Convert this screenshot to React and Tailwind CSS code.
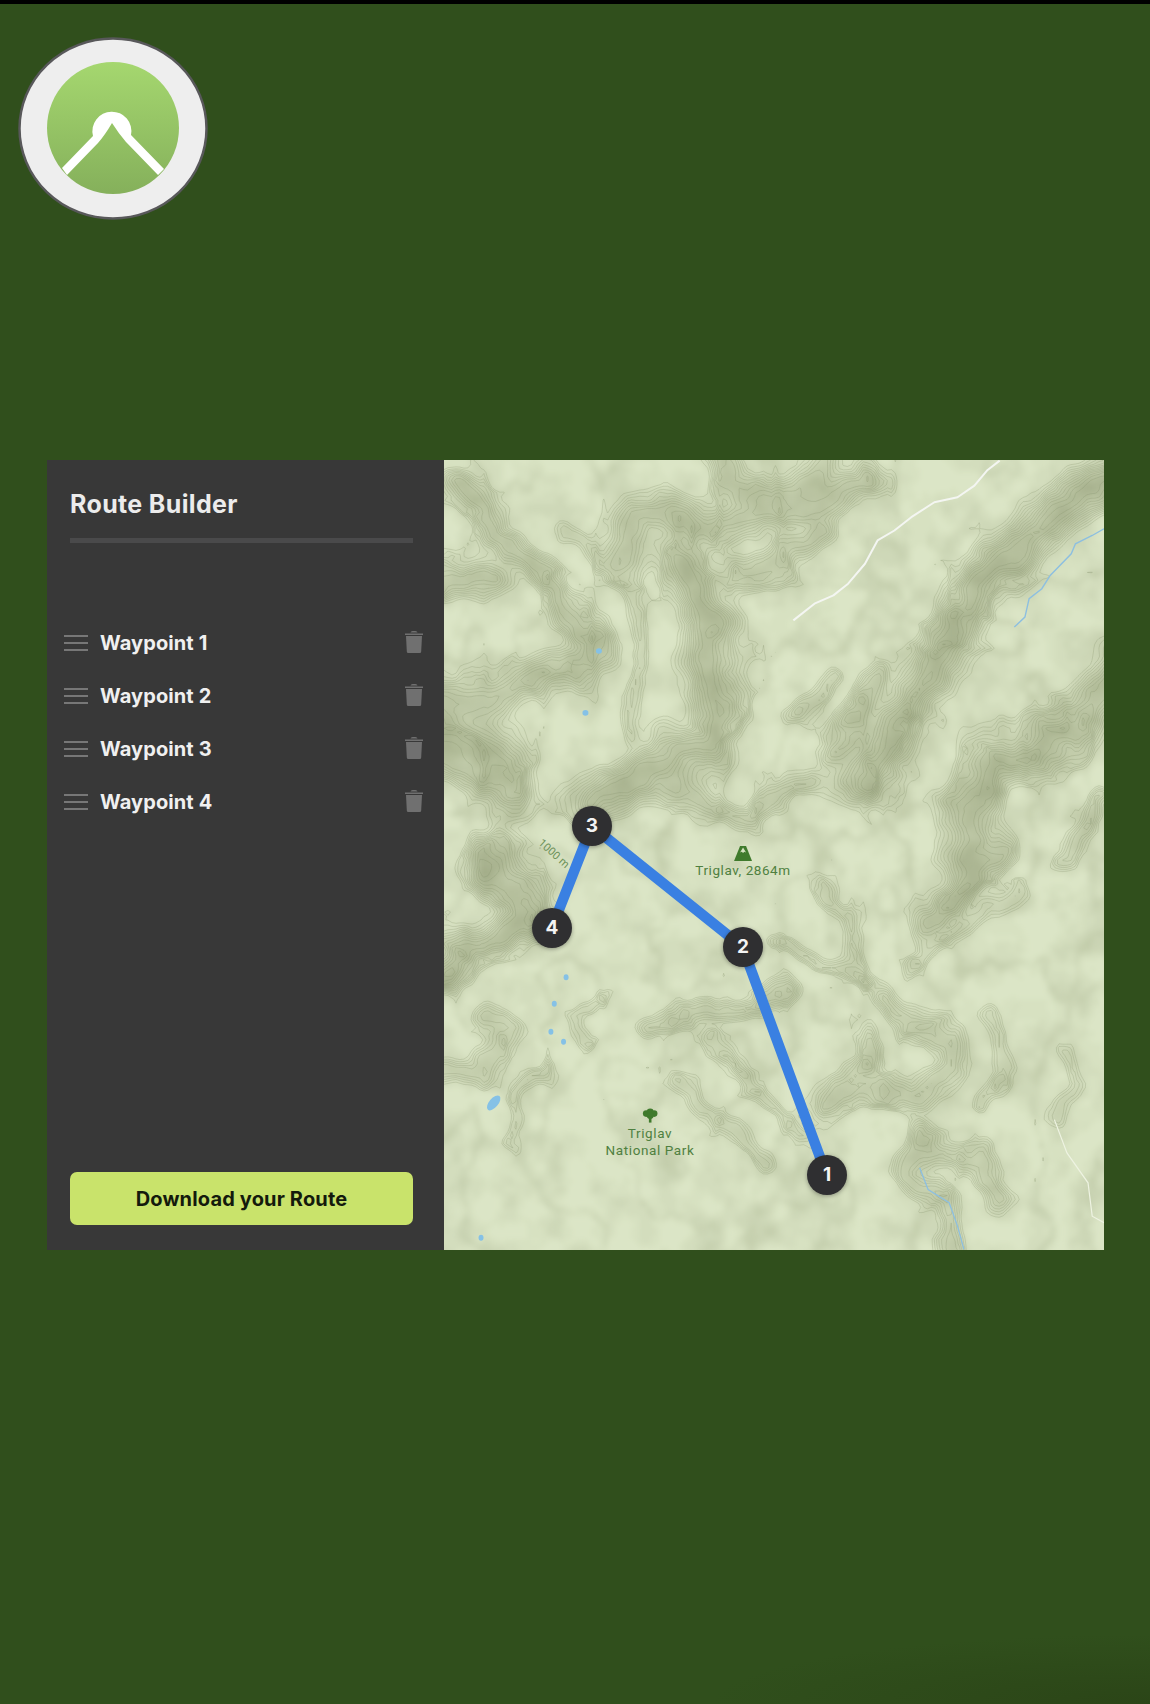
import React from "react";

const W = 661;
const H = 790;
const CELL = 4;

// ridges were read off two crops of the map, so they are in crop coordinates
const a = (pts) => pts.map(([x, y]) => [x / 2.372, y / 3]);
const b = (pts) => pts.map(([x, y]) => [x / 2.372, y / 3 + 390]);

const ridges = [
  { w: 17, k: 0.95, p: a([[1600, 40], [1450, 150], [1340, 270], [1260, 400], [1210, 520], [1170, 640], [1110, 760], [1040, 880], [990, 950]]) },
  { w: 18, k: 0.8, p: a([[1600, 620], [1500, 800], [1400, 880], [1290, 900], [1250, 1050], [1240, 1200]]) },
  { w: 12, k: 0.7, p: b([[1330, 0], [1250, 100], [1150, 220]]) },
  { w: 17, k: 0.9, p: a([[560, 280], [610, 400], [640, 520], [620, 640], [650, 740], [640, 860], [560, 880], [490, 920], [430, 960], [350, 1010]]) },
  { w: 15, k: 0.7, p: a([[1000, 60], [880, 120], [760, 150], [640, 190], [520, 140], [470, 170], [430, 300]]) },
  { w: 11, k: 0.6, p: a([[900, 200], [800, 300], [700, 340]]) },
  { w: 11, k: 0.7, p: a([[50, 50], [100, 130], [130, 220], [230, 340], [310, 450], [350, 520]]) },
  { w: 14, k: 0.7, p: a([[-30, 340], [100, 350]]) },
  { w: 16, k: 0.65, p: a([[-30, 720], [100, 720], [250, 640], [350, 590]]) },
  { w: 17, k: 0.85, p: a([[-30, 800], [100, 860], [170, 900], [170, 1000]]) },
  { w: 14, k: 0.7, p: a([[-30, 890], [120, 950]]) },
  { w: 11, k: 0.65, p: a([[1030, 650], [1000, 760], [930, 850]]) },
  { w: 8, k: 0.45, p: a([[920, 640], [850, 760]]) },
  { w: 10, k: 0.55, p: a([[550, 970], [640, 1040], [720, 1070], [800, 980], [880, 950]]) },
  { w: 10, k: 0.55, p: a([[640, -20], [680, 60], [780, 100], [880, 40], [900, -20]]) },
  { w: 8, k: 0.4, p: a([[300, 230], [380, 300], [430, 380], [480, 600], [450, 800]]) },
  { w: 8, k: 0.5, p: a([[1568, 1000], [1500, 1100], [1470, 1200]]) },
  { w: 16, k: 0.85, p: b([[110, 20], [170, 120], [200, 220], [100, 280], [-20, 350]]) },
  { w: 10, k: 0.5, p: b([[-20, 680], [100, 640], [170, 520], [100, 490]]) },
  { w: 9, k: 0.55, p: b([[480, 520], [560, 490], [680, 470], [760, 460], [800, 440]]) },
  { w: 6, k: 0.45, p: b([[780, 290], [880, 320], [960, 340], [1000, 400]]) },
  { w: 12, k: 0.6, p: b([[1000, 600], [1000, 680], [920, 750], [1000, 720], [1130, 740], [1200, 640], [1190, 560], [1050, 450]]) },
  { w: 10, k: 0.55, p: b([[1130, 870], [1090, 950], [1170, 1050], [1200, 1220]]) },
  { w: 10, k: 0.55, p: b([[1170, 900], [1270, 940], [1310, 1050]]) },
  { w: 7, k: 0.4, p: b([[1380, 130], [1250, 220], [1100, 340]]) },
  { w: 6, k: 0.35, p: b([[150, 880], [180, 730], [250, 660]]) },
  { w: 6, k: 0.35, p: b([[340, 600], [320, 480], [400, 430]]) },
  { w: 7, k: 0.4, p: b([[620, 560], [680, 650], [800, 780], [860, 860]]) },
  { w: 8, k: 0.45, p: b([[560, 700], [600, 760], [700, 860], [760, 950]]) },
  { w: 7, k: 0.35, p: b([[1480, 600], [1500, 700], [1450, 800]]) },
  { w: 8, k: 0.4, p: b([[1300, 500], [1330, 650], [1280, 760]]) },
  { w: 7, k: 0.35, p: b([[900, 100], [960, 200], [1000, 400]]) },
];

const hash = (x, y) => {
  const s = Math.sin(x * 127.1 + y * 311.7) * 43758.5453;
  return s - Math.floor(s);
};

const noise = (x, y) => {
  const ix = Math.floor(x);
  const iy = Math.floor(y);
  const fx = x - ix;
  const fy = y - iy;
  const ux = fx * fx * (3 - 2 * fx);
  const uy = fy * fy * (3 - 2 * fy);
  const top = hash(ix, iy) * (1 - ux) + hash(ix + 1, iy) * ux;
  const bottom = hash(ix, iy + 1) * (1 - ux) + hash(ix + 1, iy + 1) * ux;
  return top * (1 - uy) + bottom * uy;
};

const fbm = (x, y) => noise(x, y) * 0.55 + noise(x * 2.1, y * 2.1) * 0.3 + noise(x * 4.3, y * 4.3) * 0.15;

const segDist2 = (px, py, [x1, y1], [x2, y2]) => {
  const dx = x2 - x1;
  const dy = y2 - y1;
  let t = ((px - x1) * dx + (py - y1) * dy) / (dx * dx + dy * dy);
  t = Math.max(0, Math.min(1, t));
  const ex = px - x1 - t * dx;
  const ey = py - y1 - t * dy;
  return ex * ex + ey * ey;
};

const ridgeAt = (x, y) => {
  const wx = x + 30 * (fbm(x / 42 + 3, y / 42) - 0.5);
  const wy = y + 30 * (fbm(x / 42, y / 42 + 9) - 0.5);
  let keep = 1;
  for (const r of ridges) {
    let d = Infinity;
    for (let i = 0; i < r.p.length - 1; i++) d = Math.min(d, segDist2(wx, wy, r.p[i], r.p[i + 1]));
    keep *= 1 - r.k * Math.exp(-d / (2 * r.w * r.w));
  }
  return 1 - keep;
};

// thin branching folds, these fill the ground between the main ridges
const foldsAt = (x, y) => {
  const n = fbm(x / 62 + 11, y / 78 + 2);
  const fold = 1 - Math.min(1, Math.abs(2 * n - 1) * 5);
  return fold * fold;
};

const buildTerrain = () => {
  const cols = Math.ceil((W + 32) / CELL) + 1;
  const rows = Math.ceil((H + 32) / CELL) + 1;
  const field = new Float32Array(cols * rows);
  const shadePaths = Array.from({ length: 14 }, () => []);

  for (let j = 0; j < rows; j++) {
    for (let i = 0; i < cols; i++) {
      const x = i * CELL - 16;
      const y = j * CELL - 16;
      const s = ridgeAt(x, y);
      const f = foldsAt(x, y);
      field[j * cols + i] = s * 1.1 + f * 0.18 + 0.12 * fbm(x / 40 + 7, y / 40);
      const t = Math.max(0, Math.min(0.999, s * 0.74 + f * 0.24 + (fbm(x / 22, y / 22 + 5) - 0.32) * 0.52));
      shadePaths[Math.floor(t * 14)].push(`M${x} ${y}h${CELL}v${CELL}h-${CELL}z`);
    }
  }

  // marching squares, loose segments are fine at this line width
  const lines = [];
  for (let level = 0.26; level < 1.36; level += 0.075) {
    for (let j = 0; j < rows - 1; j++) {
      for (let i = 0; i < cols - 1; i++) {
        const v = [field[j * cols + i], field[j * cols + i + 1], field[(j + 1) * cols + i + 1], field[(j + 1) * cols + i]];
        const hits = [];
        const x = i * CELL - 16;
        const y = j * CELL - 16;
        if (v[0] < level !== v[1] < level) hits.push([x + (CELL * (level - v[0])) / (v[1] - v[0]), y]);
        if (v[1] < level !== v[2] < level) hits.push([x + CELL, y + (CELL * (level - v[1])) / (v[2] - v[1])]);
        if (v[3] < level !== v[2] < level) hits.push([x + (CELL * (level - v[3])) / (v[2] - v[3]), y + CELL]);
        if (v[0] < level !== v[3] < level) hits.push([x, y + (CELL * (level - v[0])) / (v[3] - v[0])]);
        for (let h = 0; h + 1 < hits.length; h += 2) {
          lines.push(`M${hits[h][0].toFixed(1)} ${hits[h][1].toFixed(1)}L${hits[h + 1][0].toFixed(1)} ${hits[h + 1][1].toFixed(1)}`);
        }
      }
    }
  }

  return { shades: shadePaths.map((p) => p.join("")), contours: lines.join("") };
};

const terrain = buildTerrain();

const shadeColor = (i) => {
  const t = i / 13;
  const mix = (from, to) => Math.round(from + (to - from) * t);
  return `rgb(${mix(219, 164)},${mix(229, 174)},${mix(198, 138)})`;
};

const toPath = (pts) => pts.map(([x, y], i) => `${i ? "L" : "M"}${x.toFixed(1)} ${y.toFixed(1)}`).join("");

const road = a([[830, 480], [880, 430], [925, 405], [960, 370], [1000, 310], [1030, 240], [1070, 210], [1110, 170], [1165, 125], [1220, 110], [1260, 75], [1290, 30], [1320, 0]]);
const stream = a([[1355, 500], [1380, 470], [1390, 415], [1420, 385], [1440, 345], [1490, 280], [1500, 250], [1540, 225], [1568, 205]]);
const creek = b([[1130, 955], [1150, 1020], [1200, 1060], [1220, 1130], [1235, 1200]]);
const trail = b([[1450, 810], [1480, 910], [1530, 1000], [1540, 1100], [1568, 1120]]);

const lakes = [
  ...a([[368, 572], [336, 758]]).map(([cx, cy]) => ({ cx, cy, rx: 3, ry: 2.8, r: 0 })),
  ...b([[290, 382], [262, 462], [254, 546], [284, 576], [88, 1165]]).map(([cx, cy]) => ({ cx, cy, rx: 2.5, ry: 3, r: 0 })),
  ...b([[118, 760]]).map(([cx, cy]) => ({ cx, cy, rx: 9, ry: 4.5, r: -50 })),
];

const pins = [
  { n: 1, x: 383, y: 715, pos: "left-[363px] top-[695px]" },
  { n: 2, x: 299, y: 487, pos: "left-[279px] top-[467px]" },
  { n: 3, x: 148, y: 366, pos: "left-[128px] top-[346px]" },
  { n: 4, x: 108, y: 468, pos: "left-[88px] top-[448px]" },
];

const Logo = () => (
  <svg width="190" height="184" viewBox="18 37 190 184" className="block">
    <defs>
      <linearGradient id="logoGreen" x1="0" y1="0" x2="0" y2="1">
        <stop offset="0" stopColor="#a5d76f" />
        <stop offset="1" stopColor="#85b05b" />
      </linearGradient>
    </defs>
    <ellipse cx="113" cy="128.5" rx="93.5" ry="90" fill="#eeeeee" stroke="#58585a" strokeWidth="2.5" />
    <circle cx="113" cy="128" r="66" fill="url(#logoGreen)" />
    <path d="M62 168L93 136A19.5 19.5 0 1 1 131 135L164 169L158 175L126 142Q119 134 112 123Q105 135 98 143L67 175Z" fill="#ffffff" />
  </svg>
);

const Trash = () => (
  <svg width="20" height="24" viewBox="0 0 20 24" className="-mt-[3px]">
    <path d="M1 4.5h18v1.5H1zM6.5 3.4C7 1.6 13 1.6 13.500 3.400z" fill="#707070" />
    <path d="M2 7h16l-.8 15.500a1.500 1.500 0 0 1-1.500 1.500H4.300a1.500 1.500 0 0 1-1.500-1.500z" fill="#707070" />
  </svg>
);

const Handle = () => (
  <div className="flex w-6 flex-col gap-[5px]">
    <div className="h-0.5 bg-[#777777]" />
    <div className="h-0.5 bg-[#777777]" />
    <div className="h-0.5 bg-[#777777]" />
  </div>
);

const TerrainMap = () => (
  <div className="relative h-full flex-1 overflow-hidden bg-[#d3deb9]">
    <svg viewBox={`0 0 ${W} ${H}`} className="block h-full w-full">
      <defs>
        <filter id="soft" x="-5%" y="-5%" width="110%" height="110%">
          <feGaussianBlur stdDeviation="2.5" />
        </filter>
        <filter id="fine">
          <feGaussianBlur stdDeviation="0.4" />
        </filter>
      </defs>
      <g filter="url(#soft)">
        {terrain.shades.map((d, i) => (
          <path key={i} d={d} fill={shadeColor(i)} />
        ))}
      </g>
      <path d={terrain.contours} fill="none" stroke="#7f8c66" strokeWidth="0.65" strokeOpacity="0.38" filter="url(#fine)" />
      <path d={toPath(trail)} fill="none" stroke="#eef3e2" strokeWidth="1.2" />
      <path d={toPath(road)} fill="none" stroke="#f4f6f2" strokeWidth="2" strokeLinejoin="round" />
      <path d={toPath(stream)} fill="none" stroke="#8dbfe0" strokeWidth="1.4" />
      <path d={toPath(creek)} fill="none" stroke="#8dbfe0" strokeWidth="1.3" />
      {lakes.map((l, i) => (
        <ellipse key={i} cx={l.cx} cy={l.cy} rx={l.rx} ry={l.ry} fill="#85c1e6" transform={`rotate(${l.r} ${l.cx} ${l.cy})`} />
      ))}
      <path
        d={`M${pins[0].x} ${pins[0].y}L${pins[1].x} ${pins[1].y}L${pins[2].x} ${pins[2].y}L${pins[3].x} ${pins[3].y}`}
        fill="none"
        stroke="#3a80e2"
        strokeWidth="10.500"
        strokeLinejoin="round"
      />
      {/* Triglav peak */}
      <path d="M296.500 386h6l6 15h-18z" fill="#3f7a2c" />
      <path d="M299.500 387.500l-3 5 1.700-.7 1.300 1.200 1.300-1.200 1.700.7z" fill="#d5e2c0" />
      {/* park tree */}
      <g fill="#3f7a2c">
        <circle cx="202.500" cy="654" r="3.300" />
        <circle cx="206.500" cy="652.500" r="3.500" />
        <circle cx="210.500" cy="654" r="3.300" />
        <circle cx="206.500" cy="656" r="3.500" />
        <path d="M205.200 657h2.600v6h-2.600z" />
      </g>
    </svg>

    <div className="absolute left-[239px] top-[401px] w-[120px] text-center font-['Roboto',sans-serif] text-[13.500px] leading-[19px] tracking-[0.55px] text-[#4f8040]">
      Triglav, 2864m
    </div>
    <div className="absolute left-[146px] top-[665px] w-[120px] text-center font-['Roboto',sans-serif] text-[13.500px] leading-[17px] tracking-[0.6px] text-[#4f8040]">
      Triglav
      <br />
      National Park
    </div>
    <div className="absolute left-[91px] top-[387px] rotate-[42deg] font-['Roboto',sans-serif] text-[11px] leading-[14px] text-[#6b9058]">
      1000 m
    </div>

    {pins.map((p) => (
      <div
        key={p.n}
        className={`absolute ${p.pos} flex h-10 w-10 items-center justify-center rounded-full bg-[#2f2f31] font-['Inter',sans-serif] text-[19px] font-bold text-[#f4f4f4] shadow-[0_1px_4px_rgba(0,0,0,0.35)]`}
      >
        {p.n}
      </div>
    ))}
  </div>
);

const App = () => {
  return (
    <div className="h-[1704px] overflow-hidden border-t-4 border-black bg-[#304f1c] bg-[radial-gradient(ellipse_440px_70px_at_100%_100%,#2b4517,transparent)] font-['Inter',sans-serif]">
      <div className="ml-[18px] mt-[33px]">
        <Logo />
      </div>
      <div className="ml-[47px] mt-[239px] flex h-[790px] w-[1057px]">
        <div className="flex h-full w-[397px] flex-col bg-[#383838]">
          <div className="pl-[23px] pr-[31px] pt-[28px]">
            <h1 className="text-[25px] font-bold leading-[32px] tracking-[0.35px] text-[#ececec]">Route Builder</h1>
            <div className="mt-[18px] h-[5px] bg-[#4a4a4b]" />
          </div>
          <div className="mt-[73px] flex flex-col">
            {[1, 2, 3, 4].map((n) => (
              <div key={n} className="flex h-[53px] items-center pl-[17px] pr-[20px]">
                <Handle />
                <span className="ml-3 flex-1 text-[20px] font-bold tracking-[0.1px] text-[#f0f0f0]">Waypoint {n}</span>
                <Trash />
              </div>
            ))}
          </div>
          <button className="mb-[25px] ml-[23px] mr-[31px] mt-auto h-[53px] rounded-[7px] bg-[#c9e36b] text-[20px] font-bold tracking-[0.15px] text-[#141a0c]">
            Download your Route
          </button>
        </div>
        <TerrainMap />
      </div>
    </div>
  );
};

export default App;
